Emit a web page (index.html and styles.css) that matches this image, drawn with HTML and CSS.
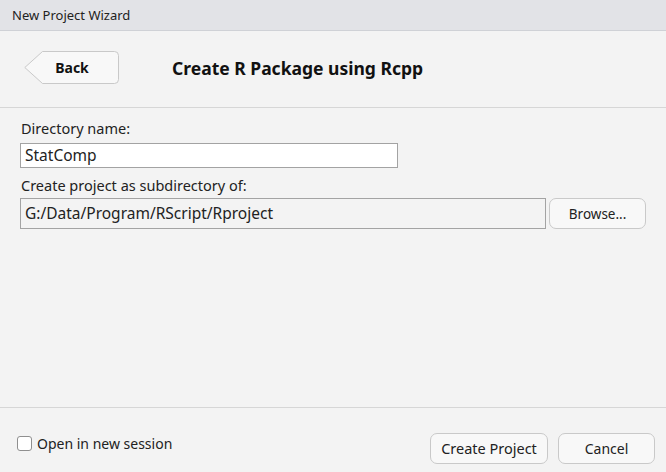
FILE: index.html
```html
<!DOCTYPE html>
<html>
<head>
<meta charset="utf-8">
<link rel="stylesheet" href="styles.css">
</head>
<body>
<div class="window">
  <div class="titlebar">New Project Wizard</div>
  <div class="header">
    <button class="back">
      <svg class="back-shape" width="96" height="34" viewBox="0 0 96 34">
        <path d="M18.5 0.5 H90.5 A4 4 0 0 1 94.5 4.5 V28.5 A4 4 0 0 1 90.5 32.5 H18.5 L0.8 16.5 Z" fill="#f8f8f8" stroke="#c9c9c9" stroke-width="1"/>
      </svg>
      <span class="back-label">Back</span>
    </button>
    <h1 class="page-title">Create R Package using Rcpp</h1>
  </div>
  <div class="content">
    <label class="field-label">Directory name:</label>
    <div class="text-input dir-input">StatComp</div>
    <label class="field-label second">Create project as subdirectory of:</label>
    <div class="path-row">
      <div class="text-input path-input">G:/Data/Program/RScript/Rproject</div>
      <button class="btn browse">Browse...</button>
    </div>
  </div>
  <div class="footer">
    <label class="check">
      <span class="box"></span>
      <span>Open in new session</span>
    </label>
    <div class="actions">
      <button class="btn create">Create Project</button>
      <button class="btn cancel">Cancel</button>
    </div>
  </div>
</div>
</body>
</html>
```
FILE: styles.css
```css
* { box-sizing: border-box; }
html, body {
  margin: 0;
  padding: 0;
  width: 666px;
  height: 472px;
  overflow: hidden;
  background: #f3f3f3;
  font-family: "Noto Sans", "Open Sans", sans-serif;
  color: #1a1a1a;
}
.window {
  width: 666px;
  height: 472px;
  display: flex;
  flex-direction: column;
}
.titlebar {
  height: 31px;
  background: #e2e3e7;
  border-bottom: 1px solid #cfd1d6;
  padding-left: 12px;
  font-size: 13px;
  line-height: 30px;
  color: #222;
}
.header {
  height: 77px;
  display: flex;
  align-items: center;
  padding-left: 24px;
  border-bottom: 1px solid #d6d6d6;
  padding-bottom: 2px;
}
.back {
  position: relative;
  width: 96px;
  height: 34px;
  border: none;
  background: transparent;
  padding: 0;
  font: inherit;
}
.back-shape {
  position: absolute;
  left: 0;
  top: 0;
}
.back-label {
  position: relative;
  display: block;
  font-size: 14px;
  font-weight: 700;
  color: #111;
  line-height: 34px;
  text-align: center;
}
.page-title {
  margin: 0 0 0 52px;
  font-size: 17.5px;
  font-weight: 700;
  color: #111;
}
.content {
  flex: 1;
  padding: 11px 20px 0 20px;
  display: flex;
  flex-direction: column;
}
.field-label {
  font-size: 14.5px;
  line-height: 19px;
  padding-left: 1px;
  margin-bottom: 5px;
  color: #222;
}
.field-label.second {
  margin-top: 8px;
  margin-bottom: 3px;
}
.text-input {
  height: 25px;
  border: 1px solid #a3a3a3;
  background: #fff;
  font-size: 15.5px;
  line-height: 23px;
  padding-left: 4px;
  color: #222;
}
.dir-input { width: 378px; }
.path-row {
  display: flex;
  align-items: center;
  gap: 3px;
}
.path-input {
  width: 527px;
  height: 31px;
  line-height: 29px;
  background: #f3f3f3;
}
.btn {
  height: 31px;
  border: 1px solid #c9c9c9;
  border-radius: 7px;
  background: #f8f8f8;
  font-family: inherit;
  font-size: 14px;
  color: #222;
  padding: 0;
}
.browse { width: 97px; font-size: 13.5px; }
.footer {
  height: 65px;
  border-top: 1px solid #d6d6d6;
  display: flex;
  align-items: center;
  justify-content: space-between;
  padding: 16px 11px 0 17px;
}
.check {
  display: flex;
  align-items: center;
  gap: 5px;
  font-size: 14px;
  color: #222;
  margin-bottom: 9px;
}
.box {
  width: 15px;
  height: 15px;
  border: 1px solid #8f8f8f;
  border-radius: 3px;
  background: #fff;
}
.actions {
  display: flex;
  gap: 10px;
}
.create { width: 118px; font-size: 14.5px; }
.cancel { width: 97px; }
```
